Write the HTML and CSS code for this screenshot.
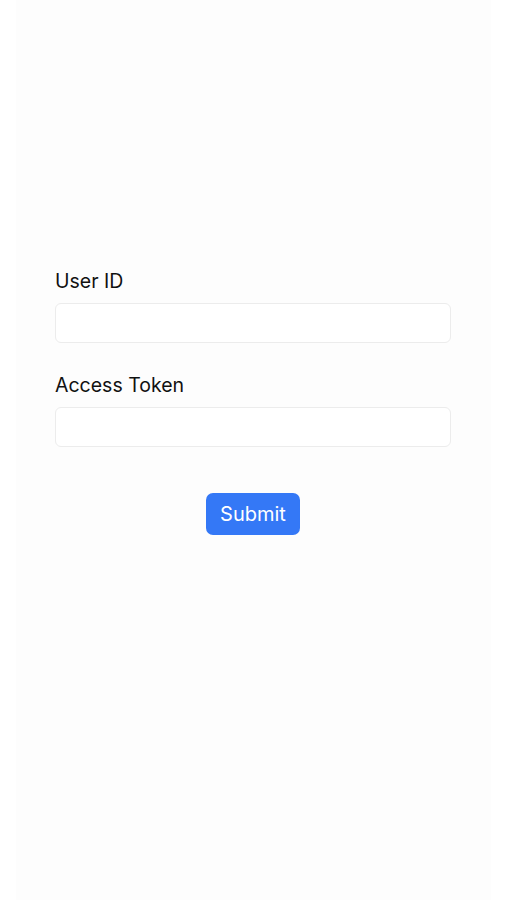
FILE: index.html
```html
<!DOCTYPE html>
<html lang="en">
<head>
<meta charset="utf-8">
<title>Login</title>
<link rel="stylesheet" href="styles.css">
</head>
<body>
<main class="panel">
  <form class="form">
    <div class="field">
      <label class="label" for="uid">User ID</label>
      <input class="input" id="uid" type="text">
    </div>
    <div class="field">
      <label class="label" for="token">Access Token</label>
      <input class="input" id="token" type="text">
    </div>
    <div class="actions">
      <button class="submit" type="button">Submit</button>
    </div>
  </form>
</main>
</body>
</html>
```

FILE: styles.css
```css
html, body {
  margin: 0;
  padding: 0;
  background: #ffffff;
}

body {
  font-family: Inter, "Noto Sans", "Liberation Sans", sans-serif;
  color: #111111;
}

.panel {
  margin: 0 16px;
  height: 900px;
  background: #fdfdfd;
  box-sizing: border-box;
  padding: 269px 40px 0 39px;
}

.form {
  display: flex;
  flex-direction: column;
}

.field {
  display: flex;
  flex-direction: column;
  gap: 10px;
}

.field + .field {
  margin-top: 30px;
}

.label {
  font-size: 19.5px;
  line-height: 24px;
  font-weight: 400;
  color: #111;
}

.input {
  box-sizing: border-box;
  height: 40px;
  width: 100%;
  border: 1px solid #ececec;
  border-radius: 6px;
  background: #ffffff;
  outline: none;
  font: inherit;
}

.actions {
  display: flex;
  justify-content: center;
  margin-top: 46px;
}

.submit {
  height: 42px;
  padding: 0 14px;
  border: none;
  border-radius: 7px;
  background: #3478f6;
  color: #ffffff;
  font-family: Inter, "Noto Sans", "Liberation Sans", sans-serif;
  font-size: 20px;
  line-height: 24px;
}
```
